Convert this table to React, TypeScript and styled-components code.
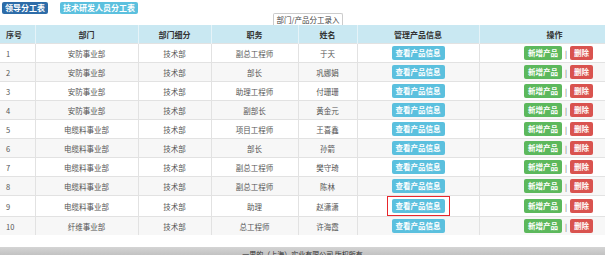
import { FC } from 'react';
import styled, { createGlobalStyle } from 'styled-components';

const rows = [
  { id: 1, dept: '安防事业部', sub: '技术部', job: '副总工程师', name: '于天' },
  { id: 2, dept: '安防事业部', sub: '技术部', job: '部长', name: '巩娜娟' },
  { id: 3, dept: '安防事业部', sub: '技术部', job: '助理工程师', name: '付珊珊' },
  { id: 4, dept: '安防事业部', sub: '技术部', job: '副部长', name: '黄金元' },
  { id: 5, dept: '电缆料事业部', sub: '技术部', job: '项目工程师', name: '王喜鑫' },
  { id: 6, dept: '电缆料事业部', sub: '技术部', job: '部长', name: '孙箭' },
  { id: 7, dept: '电缆料事业部', sub: '技术部', job: '副总工程师', name: '樊守琦' },
  { id: 8, dept: '电缆料事业部', sub: '技术部', job: '副总工程师', name: '陈林' },
  { id: 9, dept: '电缆料事业部', sub: '技术部', job: '助理', name: '赵潇潇', marked: true },
  { id: 10, dept: '纤维事业部', sub: '技术部', job: '总工程师', name: '许海霞' },
];

const columns = [
  { title: '序号', width: 35, align: 'left' },
  { title: '部门', width: 103 },
  { title: '部门细分', width: 73 },
  { title: '职务', width: 87 },
  { title: '姓名', width: 59 },
  { title: '管理产品信息', width: 122 },
  { title: '操作', width: 151 },
];

const GlobalStyle = createGlobalStyle`
  html, body {
    margin: 0;
    padding: 0;
    background: #fff;
    overflow: hidden;
  }
  body {
    font-family: 'Noto Sans CJK SC', 'Noto Sans', sans-serif;
    -webkit-text-size-adjust: none;
  }
`;

const Page = styled.div`
  width: 605px;
  height: 255px;
  display: flex;
  flex-direction: column;
  overflow: hidden;
`;

const Toolbar = styled.div`
  display: flex;
  gap: 12px;
  padding: 2px 0 0 2px;
  height: 11px;
`;

const TopButton = styled.div<{ $dark?: boolean }>`
  height: 12px;
  line-height: 12px;
  padding: 0 3px;
  border-radius: 2px;
  font-size: 8px;
  font-weight: 700;
  color: #fff;
  background: ${(p) => (p.$dark ? '#2d6ca8' : '#5bc0de')};
`;

const Caption = styled.div`
  display: flex;
  justify-content: center;
  padding-left: 11px;
  height: 12px;
`;

const Tab = styled.div`
  height: 11px;
  line-height: 11px;
  padding: 0 3px;
  border: 1px solid #ccc;
  border-bottom: none;
  border-radius: 2px 2px 0 0;
  font-size: 7.5px;
  color: #444;
  background: #fff;
`;

const Table = styled.table`
  width: 630px;
  border-collapse: collapse;
  table-layout: fixed;
  font-size: 7.5px;
  color: #555;
`;

const HeadCell = styled.th<{ $left?: boolean }>`
  height: 18px;
  padding: 0 6px;
  background: #c9e8f2;
  border-right: 1px solid #e6f3f8;
  font-size: 8px;
  font-weight: 700;
  color: #333;
  text-align: ${(p) => (p.$left ? 'left' : 'center')};
`;

const Row = styled.tr<{ $odd: boolean }>`
  background: ${(p) => (p.$odd ? '#fff' : '#f7f7f7')};
`;

const Cell = styled.td<{ $left?: boolean }>`
  height: 18px;
  padding: 0 6px;
  border-top: 1px solid #e2e2e2;
  border-right: 1px solid #e2e2e2;
  text-align: ${(p) => (p.$left ? 'left' : 'center')};
  white-space: nowrap;
`;

const Btn = styled.span<{ $color: string }>`
  display: inline-block;
  height: 14px;
  line-height: 14px;
  padding: 0 4px;
  border-radius: 2px;
  font-size: 7.5px;
  font-weight: 700;
  color: #fff;
  background: ${(p) => p.$color};
  vertical-align: middle;
`;

const Marked = styled.span`
  display: inline-block;
  padding: 2px 4px;
  border: 1px solid #e8262c;
  vertical-align: middle;
`;

const Actions = styled.div`
  display: flex;
  justify-content: center;
  align-items: center;
  gap: 3px;
  padding-left: 8px;
  color: #666;
`;

const Spacer = styled.div`
  flex: 1;
`;

const Footer = styled.div`
  height: 8px;
  background: linear-gradient(#d4d4d4, #c2c2c2);
  font-size: 7px;
  color: #333;
  text-align: center;
  line-height: 14px;
  overflow: hidden;
`;

const App: FC = () => {
  return (
    <Page>
      <GlobalStyle />
      <Toolbar>
        <TopButton $dark>领导分工表</TopButton>
        <TopButton>技术研发人员分工表</TopButton>
      </Toolbar>
      <Caption>
        <Tab>部门/产品分工录入</Tab>
      </Caption>
      <Table>
        <colgroup>
          {columns.map((c) => (
            <col key={c.title} style={{ width: c.width }} />
          ))}
        </colgroup>
        <thead>
          <tr>
            {columns.map((c) => (
              <HeadCell key={c.title} $left={c.align === 'left'}>
                {c.title}
              </HeadCell>
            ))}
          </tr>
        </thead>
        <tbody>
          {rows.map((r) => {
            const view = <Btn $color="#5bc0de">查看产品信息</Btn>;
            return (
              <Row key={r.id} $odd={r.id % 2 === 1}>
                <Cell $left>{r.id}</Cell>
                <Cell>{r.dept}</Cell>
                <Cell>{r.sub}</Cell>
                <Cell>{r.job}</Cell>
                <Cell>{r.name}</Cell>
                <Cell>{r.marked ? <Marked>{view}</Marked> : view}</Cell>
                <Cell>
                  <Actions>
                    <Btn $color="#5cb85c">新增产品</Btn>|<Btn $color="#d9534f">删除</Btn>
                  </Actions>
                </Cell>
              </Row>
            );
          })}
        </tbody>
      </Table>
      <Spacer />
      <Footer>一里的（上海）实业有限公司 版权所有</Footer>
    </Page>
  );
};

export default App;
